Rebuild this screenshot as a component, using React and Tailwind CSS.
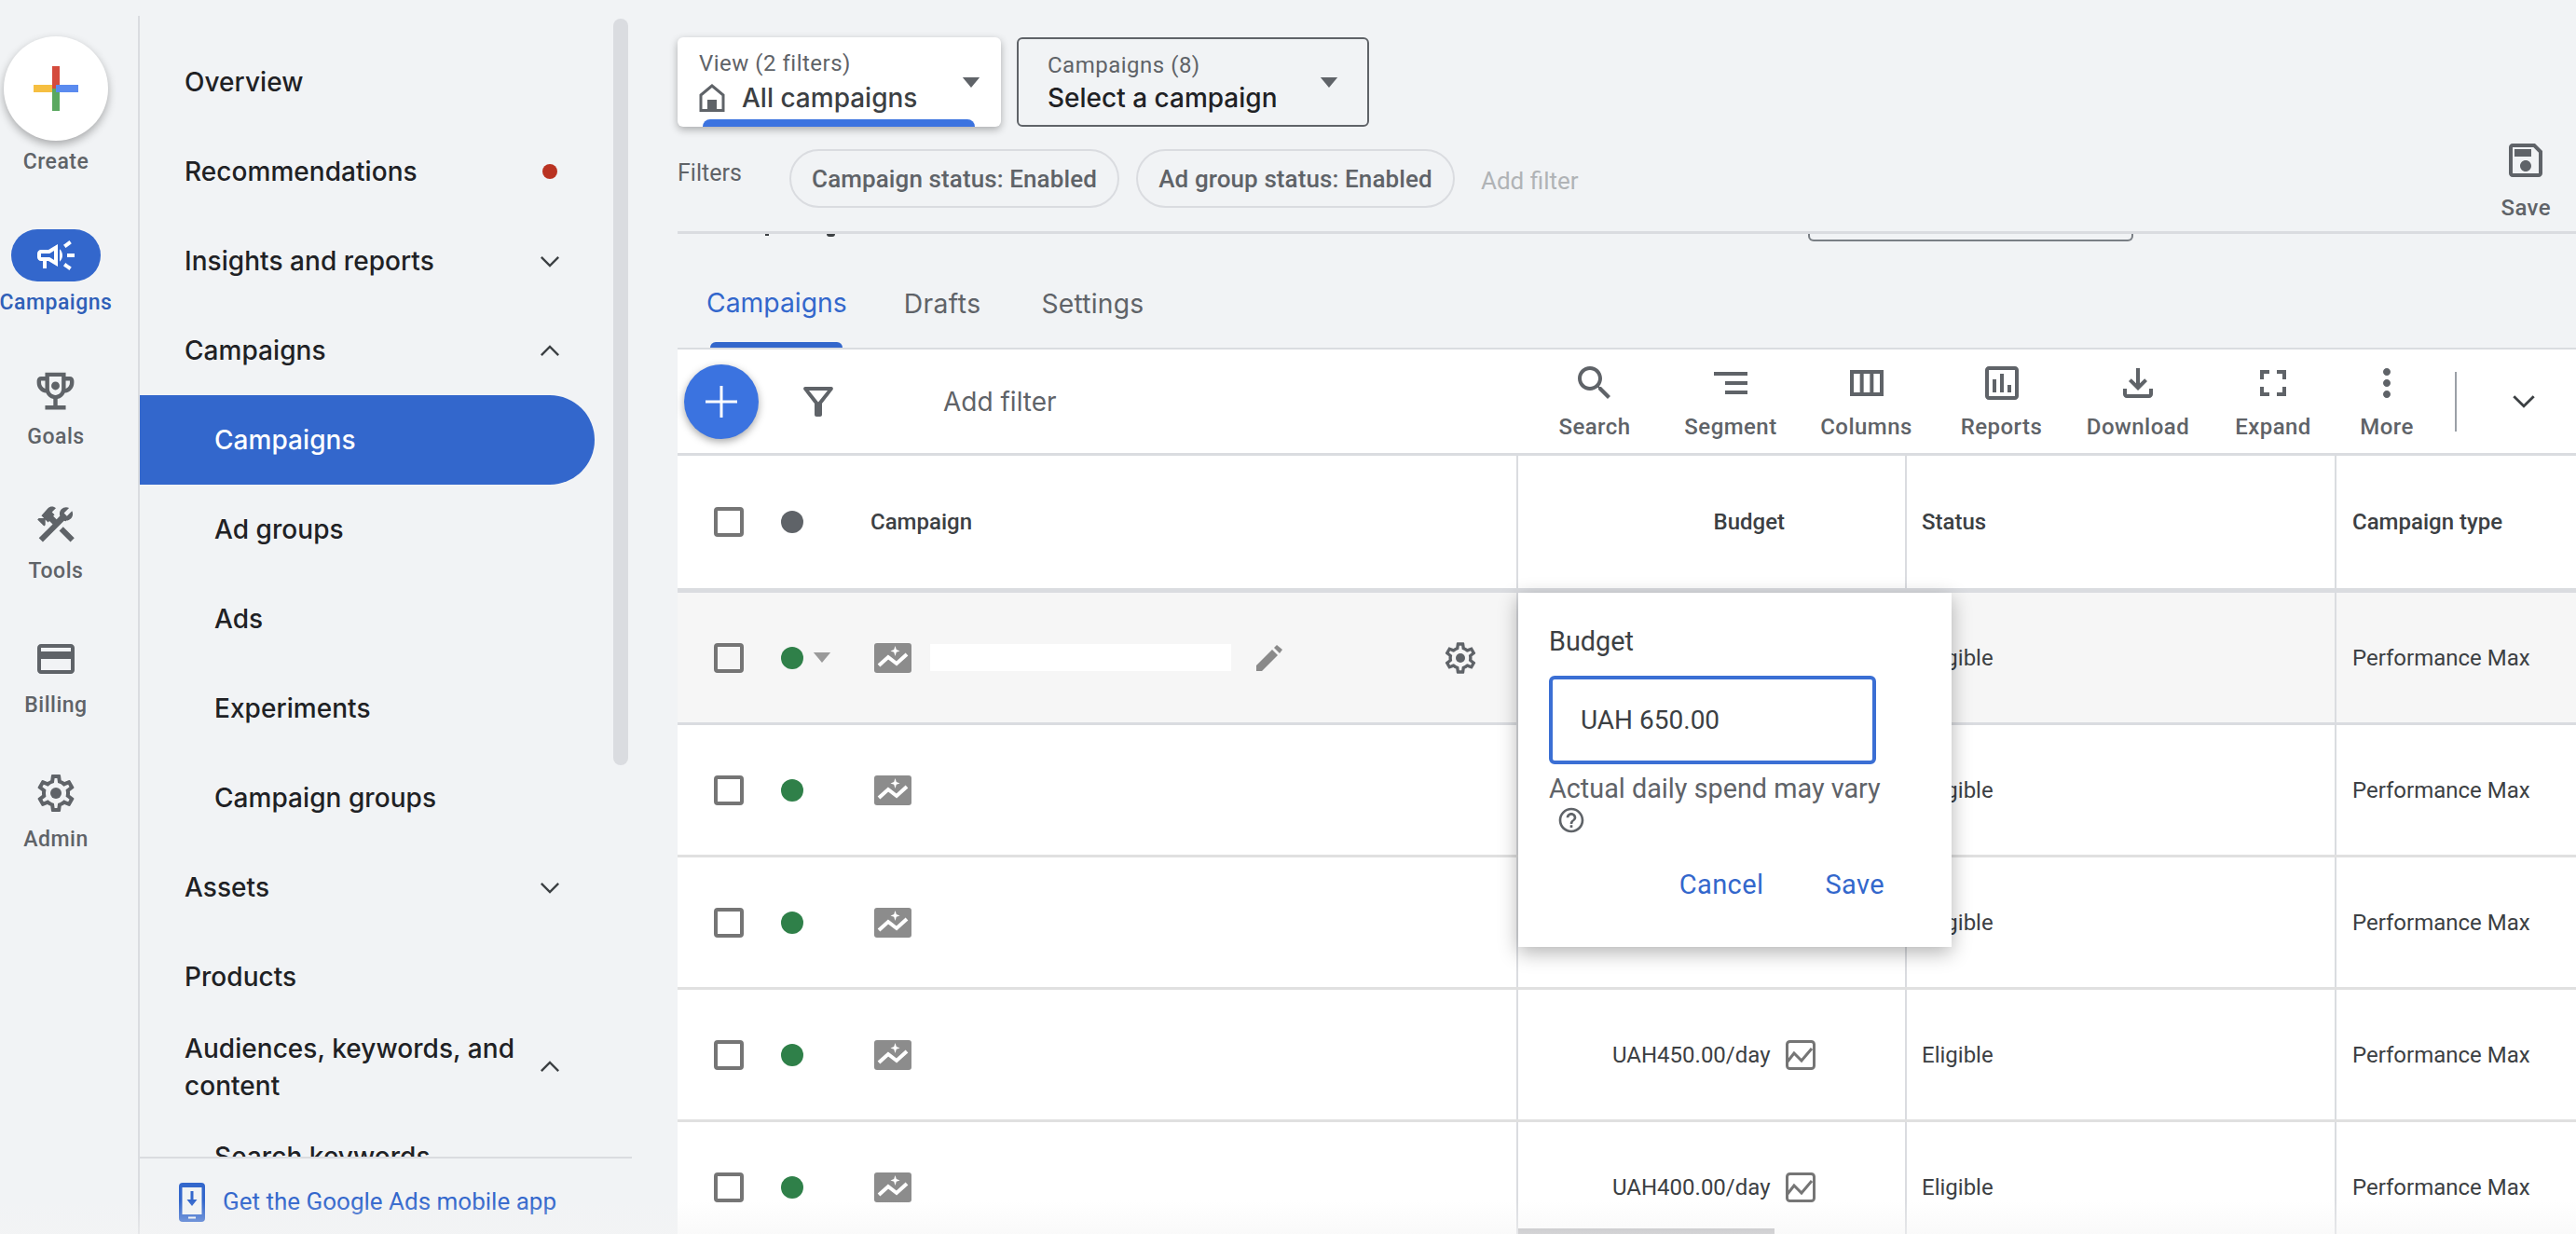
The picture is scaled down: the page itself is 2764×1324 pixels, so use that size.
import { useState } from 'react';

const ICONS = {
  campaign: 'M18 11v2h4v-2h-4zm-2 6.61c.96.71 2.21 1.65 3.2 2.39.4-.53.8-1.07 1.2-1.6-.99-.74-2.24-1.68-3.2-2.4-.4.54-.8 1.08-1.2 1.61zM20.4 5.6c-.4-.53-.8-1.07-1.2-1.6-.99.74-2.24 1.68-3.2 2.4.4.53.8 1.07 1.2 1.6.96-.72 2.21-1.65 3.2-2.4zM4 9c-1.1 0-2 .9-2 2v2c0 1.1.9 2 2 2h1v4h2v-4h1l5 3V6L8 9H4zm5.03 1.71L11 9.53v4.94l-1.97-1.18-.48-.29H4v-2h4.55l.48-.29zM15.5 12c0-1.33-.58-2.53-1.5-3.35v6.69c.92-.81 1.5-2.01 1.5-3.34z',
  trophy: 'M19 5h-2V3H7v2H5c-1.1 0-2 .9-2 2v1c0 2.55 1.92 4.63 4.39 4.94.63 1.5 1.98 2.63 3.61 2.96V19H7v2h10v-2h-4v-3.1c1.63-.33 2.98-1.46 3.61-2.96C19.08 12.63 21 10.55 21 8V7c0-1.1-.9-2-2-2zM5 8V7h2v3.82C5.84 10.4 5 9.3 5 8zm7 6c-1.65 0-3-1.35-3-3V5h6v6c0 1.65-1.35 3-3 3zm7-6c0 1.3-.84 2.4-2 2.82V7h2v1z',
  tools: 'M13.78 15.3l6 6 2.11-2.16-6-6-2.11 2.16zm3.72-5.2c-.39 0-.81-.05-1.14-.19L4.97 21.28l-2.11-2.11 7.41-7.4L8.5 10l-.72.71-1.45-1.44v2.83l-.7.71-3.54-3.54.71-.71h2.83l-1.42-1.41L7.74 3.1c1.17-1.17 3.07-1.17 4.24 0L9.86 5.23l1.41 1.41-.71.71 1.79 1.79 1.82-1.88c-.14-.33-.2-.75-.2-1.12 0-1.93 1.58-3.5 3.5-3.5.59 0 1.11.14 1.58.41l-2.73 2.73 1.58 1.58 2.73-2.73c.27.47.41.97.41 1.58 0 1.95-1.57 3.52-3.52 3.52z',
  card: 'M20 4H4c-1.11 0-1.99.89-1.99 2L2 18c0 1.11.89 2 2 2h16c1.11 0 2-.89 2-2V6c0-1.11-.89-2-2-2zm0 14H4v-6h16v6zm0-10H4V6h16v2z',
  gear: 'M19.43 12.98c.04-.32.07-.64.07-.98 0-.34-.03-.66-.07-.98l2.11-1.65c.19-.15.24-.42.12-.64l-2-3.46c-.09-.16-.26-.25-.44-.25-.06 0-.12.01-.17.03l-2.49 1c-.52-.4-1.08-.73-1.69-.98l-.38-2.65C14.46 2.18 14.25 2 14 2h-4c-.25 0-.46.18-.49.42l-.38 2.65c-.61.25-1.17.59-1.69.98l-2.49-1c-.06-.02-.12-.03-.18-.03-.17 0-.34.09-.43.25l-2 3.46c-.13.22-.07.49.12.64l2.11 1.65c-.04.32-.07.65-.07.98 0 .33.03.66.07.98l-2.11 1.65c-.19.15-.24.42-.12.64l2 3.46c.09.16.26.25.44.25.06 0 .12-.01.17-.03l2.49-1c.52.4 1.08.73 1.69.98l.38 2.65c.03.24.24.42.49.42h4c.25 0 .46-.18.49-.42l.38-2.65c.61-.25 1.17-.59 1.69-.98l2.49 1c.06.02.12.03.18.03.17 0 .34-.09.43-.25l2-3.46c.12-.22.07-.49-.12-.64l-2.11-1.65zm-1.98-1.71c.04.31.05.52.05.73 0 .21-.02.43-.05.73l-.14 1.13.89.7 1.08.84-.7 1.21-1.27-.51-1.04-.42-.9.68c-.43.32-.84.56-1.25.73l-1.06.43-.16 1.13-.2 1.35h-1.4l-.19-1.35-.16-1.13-1.06-.43c-.43-.18-.83-.41-1.23-.71l-.91-.7-1.06.43-1.27.51-.7-1.21 1.08-.84.89-.7-.14-1.13c-.03-.31-.05-.54-.05-.74s.02-.43.05-.73l.14-1.13-.89-.7-1.08-.84.7-1.21 1.27.51 1.04.42.9-.68c.43-.32.84-.56 1.25-.73l1.06-.43.16-1.13.2-1.35h1.39l.19 1.35.16 1.13 1.06.43c.43.18.83.41 1.23.71l.91.7 1.06-.43 1.27-.51.7 1.21-1.07.85-.89.7.14 1.13z',
  search: 'M15.5 14h-.79l-.28-.27C15.41 12.59 16 11.11 16 9.5 16 5.91 13.09 3 9.5 3S3 5.91 3 9.5 5.91 16 9.5 16c1.61 0 3.09-.59 4.23-1.57l.27.28v.79l5 4.99L20.49 19l-4.99-5zm-6 0C7.01 14 5 11.99 5 9.5S7.01 5 9.5 5 14 7.01 14 9.5 11.99 14 9.5 14z',
  segment: 'M9 18h12v-2H9v2zM3 6v2h18V6H3zm6 7h12v-2H9v2z',
  columns: 'M3 5v14h18V5H3zm5.33 12H5V7h3.33v10zm5.34 0h-3.34V7h3.34v10zM19 17h-3.33V7H19v10z',
  reports: 'M19 3H5c-1.1 0-2 .9-2 2v14c0 1.1.9 2 2 2h14c1.1 0 2-.9 2-2V5c0-1.1-.9-2-2-2zm0 16H5V5h14v14zM7 10h2v7H7zm4-3h2v10h-2zm4 6h2v4h-2z',
  download: 'M18 15v3H6v-3H4v3c0 1.1.9 2 2 2h12c1.1 0 2-.9 2-2v-3h-2zm-1-4l-1.41-1.41L13 12.17V4h-2v8.17L8.41 9.59 7 11l5 5 5-5z',
  expand: 'M7 14H5v5h5v-2H7v-3zm-2-4h2V7h3V5H5v5zm12 7h-3v2h5v-5h-2v3zM14 5v2h3v3h2V5h-5z',
  more: 'M12 8c1.1 0 2-.9 2-2s-.9-2-2-2-2 .9-2 2 .9 2 2 2zm0 2c-1.1 0-2 .9-2 2s.9 2 2 2 2-.9 2-2-.9-2-2-2zm0 6c-1.1 0-2 .9-2 2s.9 2 2 2 2-.9 2-2-.9-2-2-2z',
  save: 'M17 3H5c-1.11 0-2 .9-2 2v14c0 1.1.89 2 2 2h14c1.1 0 2-.9 2-2V7l-4-4zm2 16H5V5h11.17L19 7.83V19zm-7-7c-1.66 0-3 1.34-3 3s1.34 3 3 3 3-1.34 3-3-1.34-3-3-3zM6 6h9v4H6z',
  filter: 'M7 6h10l-5.01 6.3L7 6zm-2.75-.39C6.27 8.2 10 13 10 13v6c0 .55.45 1 1 1h2c.55 0 1-.45 1-1v-6s3.72-4.8 5.74-7.39c.51-.66.04-1.61-.79-1.61H5.04c-.83 0-1.3.95-.79 1.61z',
  help: 'M11 18h2v-2h-2v2zm1-16C6.48 2 2 6.48 2 12s4.48 10 10 10 10-4.48 10-10S17.52 2 12 2zm0 18c-4.41 0-8-3.59-8-8s3.59-8 8-8 8 3.59 8 8-3.59 8-8 8zm0-14c-2.21 0-4 1.79-4 4h2c0-1.1.9-2 2-2s2 .9 2 2c0 2-3 1.75-3 5h2c0-2.25 3-2.5 3-5 0-2.21-1.79-4-4-4z',
};

// centre dots that the outlined glyphs above don't include
const DOTS = {
  trophy: { cx: 12, cy: 9.5, r: 2 },
  gear: { cx: 12, cy: 12, r: 3 },
};

const Icon = ({ name, className }) => (
  <svg viewBox="0 0 24 24" fill="currentColor" className={className}>
    <path d={ICONS[name]} />
    {DOTS[name] && <circle {...DOTS[name]} />}
  </svg>
);

const Chevron = ({ up, className = 'w-[22px] h-[13px]' }) => (
  <svg viewBox="0 0 24 14" fill="none" stroke="#3c4043" strokeWidth="2.6" className={className}>
    <polyline points={up ? '2,12 12,2 22,12' : '2,2 12,12 22,2'} />
  </svg>
);

const CaretDown = ({ className }) => (
  <svg viewBox="0 0 20 12" fill="currentColor" className={className}>
    <polygon points="0,0 20,0 10,12" />
  </svg>
);

const RailItem = ({ icon, label, iconClass = 'w-[48px] h-[48px]' }) => (
  <div className="h-[144px] flex flex-col items-center pt-[27px] text-[#5f6368]">
    <div className="w-[48px] h-[48px] flex items-center justify-center">
      <Icon name={icon} className={`${iconClass} shrink-0`} />
    </div>
    <span className="mt-[9px] text-[23px] leading-[34px] font-medium tracking-[0.5px]">{label}</span>
  </div>
);

const LeftRail = () => (
  <div className="w-[150px] h-full shrink-0 flex flex-col items-center pr-[30px] pt-[39px] relative">
    <div className="absolute right-0 top-[17px] bottom-0 w-[2px] bg-[#dadce0]" />
    <div className="w-[112px] h-[112px] rounded-full bg-white shadow-[0_4px_10px_rgba(0,0,0,0.3)] flex items-center justify-center shrink-0">
      <svg viewBox="0 0 48 48" className="w-[48px] h-[48px]">
        <rect x="0" y="20" width="24" height="8" fill="#f6bf41" />
        <rect x="20" y="0" width="8" height="24" fill="#d44b3d" />
        <rect x="20" y="24" width="8" height="24" fill="#5aa860" />
        <rect x="24" y="20" width="24" height="8" fill="#5b8bef" />
      </svg>
    </div>
    <span className="mt-[6px] text-[23px] leading-[34px] font-medium tracking-[0.5px] text-[#5f6368]">Create</span>
    <div className="mt-[55px] flex flex-col items-center w-full">
      <div className="w-[96px] h-[56px] rounded-full bg-[#3367cc] flex items-center justify-center text-white">
        <Icon name="campaign" className="w-[48px] h-[48px]" />
      </div>
      <span className="mt-[6px] mb-[26px] text-[23px] leading-[34px] font-medium tracking-[0.5px] text-[#2f5fb8] whitespace-nowrap">Campaigns</span>
    </div>
    <RailItem icon="trophy" label="Goals" iconClass="w-[53px] h-[53px]" />
    <RailItem icon="tools" label="Tools" />
    <RailItem icon="card" label="Billing" />
    <RailItem icon="gear" label="Admin" />
  </div>
);

const NavRow = ({ label, sub, trailing }) => (
  <div className={sub ? 'h-[96px] shrink-0 flex items-center pl-[80px] pr-[126px]' : 'h-[96px] shrink-0 flex items-center justify-between pl-[48px] pr-[126px]'}>
    <span className="text-[28px] font-[450] tracking-[0.05px] text-[#202124]">{label}</span>
    {trailing}
  </div>
);

const SideNav = () => (
  <div className="w-[577px] h-full shrink-0 relative flex flex-col font-['Inter',sans-serif]">
    <div className="absolute left-[508px] top-[20px] w-[16px] h-[801px] rounded-full bg-[#dadce0]" />
    <div className="h-[1241px] shrink-0 overflow-hidden pt-[40px] flex flex-col">
      <NavRow label="Overview" />
      <NavRow label="Recommendations" trailing={<span className="w-[16px] h-[16px] rounded-full bg-[#b93221] mr-[3px]" />} />
      <NavRow label="Insights and reports" trailing={<Chevron />} />
      <NavRow label="Campaigns" trailing={<Chevron up />} />
      <div className="w-[488px] h-[96px] shrink-0 rounded-r-full bg-[#3367cc] flex items-center pl-[80px]">
        <span className="text-[28px] font-[450] tracking-[0.05px] text-white">Campaigns</span>
      </div>
      <NavRow sub label="Ad groups" />
      <NavRow sub label="Ads" />
      <NavRow sub label="Experiments" />
      <NavRow sub label="Campaign groups" />
      <NavRow label="Assets" trailing={<Chevron />} />
      <NavRow label="Products" />
      <div className="h-[97px] shrink-0 flex items-center justify-between pl-[48px] pr-[126px]">
        <span className="text-[28px] font-[450] tracking-[0.05px] leading-[40px] text-[#202124] w-[380px]">Audiences, keywords, and content</span>
        <Chevron up />
      </div>
      <NavRow sub label="Search keywords" />
    </div>
    <div className="flex-1 w-[528px] border-t-2 border-[#dadce0] flex items-center pl-[42px] pt-[12px] gap-[19px]">
      <svg viewBox="0 0 28 42" className="w-[28px] h-[42px]">
        <rect width="28" height="42" rx="4" fill="#3367cc" />
        <rect x="3.5" y="5" width="21" height="29" fill="#f1f3f4" />
        <path d="M12.5 9h3v9h4l-5.5 7-5.5-7h4z" fill="#3367cc" />
        <rect x="10" y="36.5" width="8" height="2" fill="#f1f3f4" />
      </svg>
      <span className="font-['Roboto',sans-serif] text-[26px] text-[#3367cc] whitespace-nowrap">Get the Google Ads mobile app</span>
    </div>
  </div>
);

const TOOL_ITEMS = [
  { icon: 'search', label: 'Search', w: 'w-[146px]' },
  { icon: 'segment', label: 'Segment', w: 'w-[146px]' },
  { icon: 'columns', label: 'Columns', w: 'w-[145px]' },
  { icon: 'reports', label: 'Reports', w: 'w-[145px]' },
  { icon: 'download', label: 'Download', w: 'w-[148px]' },
  { icon: 'expand', label: 'Expand', w: 'w-[142px]' },
  { icon: 'more', label: 'More', w: 'w-[102px]' },
];

const Toolbar = () => (
  <div className="h-[114px] shrink-0 bg-white border-b-[3px] border-[#dadce0] flex items-center pl-[7px]">
    <div className="w-[80px] h-[80px] rounded-full bg-[#3b73e0] shadow-[0_3px_8px_rgba(0,0,0,0.35)] flex items-center justify-center text-white">
      <svg viewBox="0 0 36 36" className="w-[36px] h-[36px]" fill="currentColor">
        <rect x="16.5" y="1" width="3" height="34" />
        <rect x="1" y="16.5" width="34" height="3" />
      </svg>
    </div>
    <Icon name="filter" className="w-[48px] h-[48px] ml-[40px] text-[#5f6368]" />
    <span className="ml-[110px] text-[28px] text-[#5f6368] font-['Inter',sans-serif]">Add filter</span>
    <div className="ml-auto flex items-center">
      {TOOL_ITEMS.map((item) => (
        <div key={item.label} className={`${item.w} flex flex-col items-center text-[#5f6368]`}>
          <Icon name={item.icon} className="w-[48px] h-[48px]" />
          <span className="mt-[7px] text-[24px] leading-[32px] tracking-[0.45px] font-medium">{item.label}</span>
        </div>
      ))}
      <div className="ml-[22px] w-[2px] h-[64px] bg-[#9aa0a6]" />
      <div className="w-[128px] pl-[16px] flex justify-center"><Chevron className="w-[26px] h-[15px]" /></div>
    </div>
  </div>
);

const Checkbox = () => <div className="w-[32px] h-[32px] shrink-0 rounded-[4px] border-[4px] border-[#757575]" />;

const TypeIcon = () => (
  <svg viewBox="0 0 40 32" className="w-[40px] h-[32px]">
    <rect width="40" height="32" rx="3" fill="#8c8c8c" />
    <polyline points="5,24 15,15 24,22 35,12" fill="none" stroke="#fff" strokeWidth="4" />
    <path d="M22.5 3l1.3 3.9L27.5 8.5l-3.7 1.3L22.5 14l-1.3-4.2L17.5 8.5l3.7-1.6z" fill="#fff" />
  </svg>
);

const TrendIcon = () => (
  <svg viewBox="0 0 32 32" className="w-[32px] h-[32px]" fill="none" stroke="#757575">
    <rect x="1.5" y="1.5" width="29" height="29" rx="3" strokeWidth="3" />
    <polyline points="2,23 9,14 17,22 28,9" strokeWidth="3" />
  </svg>
);

const PencilIcon = () => (
  <svg viewBox="0 0 28 28" className="w-[28px] h-[28px]" fill="#8a8a8a">
    <polygon points="0,28 0,22 17,5 23,11 6,28" />
    <polygon points="19,3 22,0 28,5 25,9" />
  </svg>
);

const HomeIcon = () => (
  <svg viewBox="0 0 28 30" className="w-[28px] h-[30px] shrink-0">
    <path d="M14 2L2 12v16.5h24V12z" fill="none" stroke="#5f6368" strokeWidth="3" />
    <rect x="9" y="17" width="10" height="12" fill="#5f6368" />
  </svg>
);

const ROWS = [
  { budget: null, active: true },
  { budget: null },
  { budget: null },
  { budget: 'UAH450.00/day' },
  { budget: 'UAH400.00/day' },
];

const CampaignRow = ({ row }) => (
  <div className={row.active ? 'h-[142px] shrink-0 grid grid-cols-[902px_417px_461px_1fr] bg-[#f6f6f6] border-b-[3px] border-[#dadce0] text-[24px] text-[#3c4043]' : 'h-[142px] shrink-0 grid grid-cols-[902px_417px_461px_1fr] bg-white border-b-[3px] border-[#e0e0e0] text-[24px] text-[#3c4043]'}>
    <div className="border-r-2 border-[#dadce0] flex items-center pl-[39px]">
      <Checkbox />
      <span className="ml-[40px] w-[24px] h-[24px] rounded-full bg-[#2f8049]" />
      <div className="w-[32px] pl-[10px]">
        {row.active && <CaretDown className="w-[20px] h-[11px] text-[#9a9a9a]" />}
      </div>
      <div className="ml-[44px]"><TypeIcon /></div>
      {row.active && (
        <>
          <div className="ml-[20px] w-[323px] h-[29px] bg-white" />
          <div className="ml-[27px] w-[28px]"><PencilIcon /></div>
          <Icon name="gear" className="ml-[171px] w-[40px] h-[40px] text-[#5f6368]" />
        </>
      )}
    </div>
    <div className="border-r-2 border-[#dadce0] flex items-center pl-[101px] gap-[16px]">
      {row.budget && <span>{row.budget}</span>}
      {row.budget && <TrendIcon />}
    </div>
    <div className="border-r-2 border-[#dadce0] flex items-center pl-[16px]">Eligible</div>
    <div className="flex items-center pl-[17px] whitespace-nowrap">Performance Max</div>
  </div>
);

const HeaderRow = () => (
  <div className="h-[147px] shrink-0 grid grid-cols-[902px_417px_461px_1fr] bg-white border-b-[5px] border-[#dadce0] text-[24px] font-medium text-[#3c4043]">
    <div className="border-r-2 border-[#dadce0] flex items-center pl-[39px]">
      <Checkbox />
      <span className="ml-[40px] w-[24px] h-[24px] rounded-full bg-[#5f6368]" />
      <span className="ml-[72px]">Campaign</span>
    </div>
    <div className="border-r-2 border-[#dadce0] flex items-center justify-end pr-[129px]">Budget</div>
    <div className="border-r-2 border-[#dadce0] flex items-center pl-[16px]">Status</div>
    <div className="flex items-center pl-[17px] whitespace-nowrap">Campaign type</div>
  </div>
);

const BudgetPopup = () => {
  const [value, setValue] = useState('UAH 650.00');
  return (
    <div className="absolute left-[902px] top-[636px] w-[465px] h-[380px] bg-white shadow-[0_6px_20px_rgba(0,0,0,0.3)] px-[33px] pt-[34px] flex flex-col">
      <span className="text-[28.8px] leading-[36px] text-[#3c4043]">Budget</span>
      <input
        value={value}
        onChange={(e) => setValue(e.target.value)}
        className="mt-[19px] w-[351px] h-[95px] rounded-[6px] border-[4px] border-[#3b6fd4] pl-[30px] text-[28px] text-[#3c4043] outline-none"
      />
      <span className="mt-[8px] text-[28.8px] leading-[36px] text-[#5f6368] whitespace-nowrap">Actual daily spend may vary</span>
      <Icon name="help" className="ml-[8px] w-[32px] h-[32px] text-[#5f6368]" />
      <div className="mt-[32px] flex justify-end gap-[66px] w-[360px] text-[29px] tracking-[0.4px] text-[#3367cc]">
        <span>Cancel</span>
        <span>Save</span>
      </div>
    </div>
  );
};

const MainPanel = () => (
  <div className="flex-1 h-full min-w-0 flex flex-col relative">
    <div className="h-[248px] shrink-0 flex flex-col">
      <div className="flex gap-[17px] pt-[40px]">
        <div className="w-[347px] h-[96px] rounded-[6px] bg-white shadow-[0_3px_8px_rgba(0,0,0,0.3)] relative overflow-hidden pl-[23px] pt-[11px]">
          <div className="text-[24px] leading-[34px] tracking-[0.5px] text-[#5f6368]">View (2 filters)</div>
          <div className="flex items-center gap-[18px] mt-[2px] text-[28px] font-medium leading-[36px] text-[#3c4043] font-['Inter',sans-serif]">
            <HomeIcon />
            All campaigns
          </div>
          <CaretDown className="absolute left-[305px] top-[43px] w-[20px] h-[11px] text-[#5f6368]" />
          <div className="absolute left-[27px] bottom-0 w-[292px] h-[8px] rounded-t-[8px] bg-[#3b73e0]" />
        </div>
        <div className="w-[378px] h-[96px] rounded-[6px] border-2 border-[#5f6368] relative pl-[31px] pt-[11px]">
          <div className="text-[24px] leading-[34px] tracking-[0.5px] text-[#5f6368]">Campaigns (8)</div>
          <div className="text-[28px] font-medium leading-[36px] text-[#202124] font-['Inter',sans-serif]">Select a campaign</div>
          <CaretDown className="absolute left-[323px] top-[41px] w-[20px] h-[11px] text-[#5f6368]" />
        </div>
      </div>
      <div className="flex items-start flex-1 min-h-0 relative">
        <span className="mt-[31px] w-[120px] text-[25px] text-[#5f6368]">Filters</span>
        <div className="mt-[24px] pt-[2px] h-[63px] w-[354px] rounded-full border-2 border-[#dadce0] flex items-center justify-center text-[26px] font-medium tracking-[0.1px] text-[#5f6368] whitespace-nowrap">Campaign status: Enabled</div>
        <div className="mt-[24px] pt-[2px] ml-[18px] h-[63px] w-[342px] rounded-full border-2 border-[#dadce0] flex items-center justify-center text-[26px] font-medium tracking-[0.1px] text-[#5f6368] whitespace-nowrap">Ad group status: Enabled</div>
        <span className="mt-[39px] ml-[28px] text-[26px] text-[#b0b3b6]">Add filter</span>
        <div className="absolute right-[27px] top-[12px] flex flex-col items-center text-[#5f6368]">
          <Icon name="save" className="w-[48px] h-[48px]" />
          <span className="mt-[12px] text-[24px] leading-[30px] font-medium tracking-[0.4px]">Save</span>
        </div>
      </div>
    </div>
    <div className="h-[125px] shrink-0 border-t-[3px] border-[#dadce0] relative font-['Inter',sans-serif]">
      {/* bits of scrolled-away content peeking out under the sticky header */}
      <div className="absolute left-[94px] top-0 w-[4px] h-[2px] bg-[#3c4043]" />
      <div className="absolute left-[160px] top-0 w-[9px] h-[3px] rounded-b-full bg-[#3c4043]" />
      <div className="absolute left-[1213px] top-0 w-[349px] h-[8px] rounded-b-[6px] border-2 border-t-0 border-[#7a7f85]" />
      <div className="flex items-end gap-[61px] h-full pl-[31px] text-[28.3px] text-[#5f6368]">
        <div className="flex flex-col items-center">
          <span className="text-[#3367cc]">Campaigns</span>
          <div className="mt-[21px] w-[142px] h-[6px] rounded-t-[6px] bg-[#3367cc]" />
        </div>
        <span className="pb-[26px] tracking-[0.4px]">Drafts</span>
        <span className="pb-[26px] ml-[4px] tracking-[0.2px]">Settings</span>
      </div>
    </div>
    <div className="h-[2px] shrink-0 bg-[#dadce0]" />
    <Toolbar />
    <div className="flex-1 min-h-0 flex flex-col overflow-hidden">
      <HeaderRow />
      {ROWS.map((row, i) => <CampaignRow key={i} row={row} />)}
    </div>
    <BudgetPopup />
    <div className="absolute left-[902px] bottom-0 w-[275px] h-[6px] bg-[#b4b4b8]" />
  </div>
);

export default function App() {
  return (
    <div className="w-[2764px] h-[1324px] flex overflow-hidden bg-[#f1f3f5] font-['Roboto',sans-serif] relative">
      <LeftRail />
      <SideNav />
      <MainPanel />
      <div className="absolute left-0 right-0 bottom-0 h-[36px] bg-gradient-to-b from-transparent to-[#f4f4f4]/50 pointer-events-none" />
    </div>
  );
}
